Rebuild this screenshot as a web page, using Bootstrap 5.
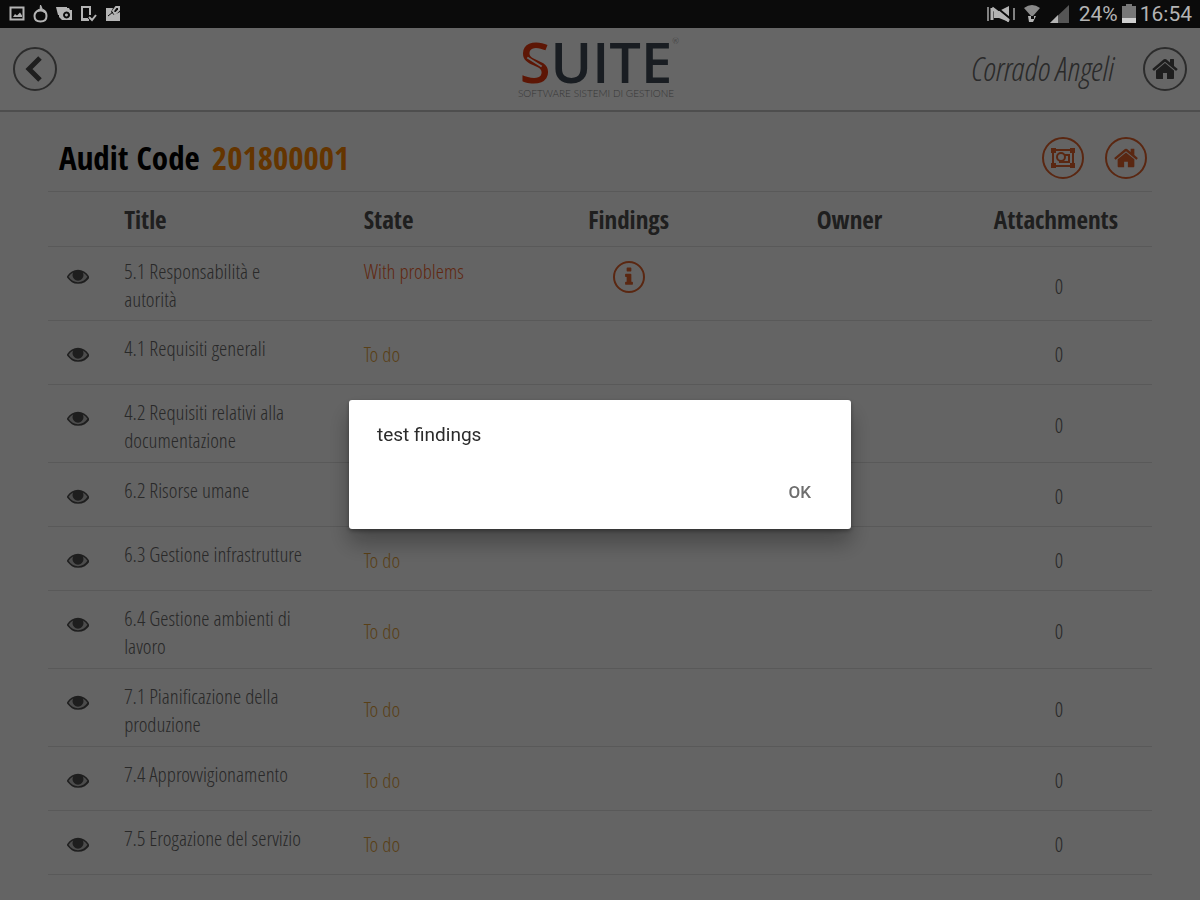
<!DOCTYPE html>
<html lang="en">
<head>
<meta charset="utf-8">
<meta name="viewport" content="width=device-width, initial-scale=1">
<title>Suite - Audit 201800001</title>
<link href="https://cdn.jsdelivr.net/npm/bootstrap@5.3.0/dist/css/bootstrap.min.css" rel="stylesheet">
<style>
:root { --bar-h: 28px; --cond-light: "Open Sans Condensed Light", "Open Sans Condensed", "Roboto Condensed", sans-serif; --cond-bold: "Open Sans Condensed", "Roboto Condensed", sans-serif; }
body { background: #fafafa; color: #666; font-family: var(--cond-light); font-weight: 300; font-size: 21px; line-height: 28px; min-height: 100vh; }
.status-bar { height: var(--bar-h); background: #0b0b0b; color: #b4b4b4; font-family: Roboto, sans-serif; font-weight: 400; font-size: 21px; line-height: 28px; z-index: 1070; }
.app-header { height: 84px; padding: 0 13px; background: #fff; border-bottom: 2px solid #c4c4c4; }
.app-header > div { flex: 1 1 0; }
.round-btn { width: 44px; height: 44px; flex: none; border: 2px solid currentColor; border-radius: 50%; background: none; padding: 0; color: #6e6e6e; }
.round-btn svg { color: #4c4c4c; }
.round-btn.accent { color: #e0622c; width: 42px; height: 42px; }
.round-btn.accent svg { color: #e0622c; }
.round-btn.info-btn { width: 32px; height: 32px; }
.brand-block { padding-bottom: 4px; }
.brand-name { font-family: "Open Sans", sans-serif; font-weight: 600; font-size: 56px; line-height: 52px; color: #3f4a55; }
.brand-s { color: #e8380d; position: relative; }
.brand-s::after { content: ""; position: absolute; left: 6px; top: 38px; width: 17px; height: 2px; background: #fff; transform: rotate(32deg); }
.brand-tag { font-family: Lato, sans-serif; font-size: 10px; line-height: 12px; color: #8a8a8a; }
.brand-reg { font-size: 8px; line-height: 12px; color: #777; font-family: Lato, sans-serif; width: 0; }
.user-name { font-style: italic; font-size: 33px; line-height: 44px; color: #6a6a6a; }
.user-area { gap: 30px; }
.audit-head { height: 79px; padding: 12px 5px 0 11px; }
.audit-head h1 { font-family: var(--cond-bold); font-weight: 700; font-size: 33px; line-height: 44px; color: #000; }
.audit-code { color: #f98500; }
.audit-actions { gap: 21px; }
.audit-table { --bs-table-bg: transparent; --bs-table-color: #666; table-layout: fixed; border-top: 1px solid #dedede; border-color: #dedede; }
.audit-table > :not(caption) > * > * { padding: 0; border-bottom: 1px solid #dedede; }
.audit-table th { font-family: var(--cond-bold); font-weight: 700; font-size: 25px; height: 55px; color: #4e4e4e; vertical-align: middle; }
.audit-table tbody td { height: 64px; }
.audit-table tbody .cell-title { padding: 13px 50px 8px 0; vertical-align: top; }
.audit-table tbody .cell-eye { padding: 22px 16px 0 0; vertical-align: top; text-align: center; }
.audit-table tbody .cell-mid { padding-top: 3px; vertical-align: middle; }
.audit-table tbody .cell-count { padding-right: 0; padding-left: 6px; }
.audit-table tbody tr.has-finding td { padding-top: 10px; padding-bottom: 6px; height: 74px; }
.audit-table tbody tr.has-finding .cell-eye { padding-top: 18px; }
.audit-table tbody tr.has-finding .cell-info { padding-top: 14px; }
.eye-btn { background: none; border: 0; padding: 0; width: 24px; height: 22px; color: #4c4c4c; display: inline-flex; align-items: center; justify-content: center; vertical-align: top; }
.state-problem { color: #f0652f; }
.audit-table .state-todo { color: #dfa03a; }
.modal-backdrop.page-dim { --bs-backdrop-opacity: .6; }
.alert-modal { top: var(--bar-h); height: calc(100% - var(--bar-h)); font-family: Roboto, sans-serif; font-weight: 400; }
.alert-modal .modal-dialog { --bs-modal-width: 502px; }
.alert-modal .modal-content { border: 0; border-radius: 3px; padding: 22px 28px 17px; box-shadow: 0 14px 22px rgba(0,0,0,.3), 0 2px 4px rgba(0,0,0,.35); }
.alert-modal p { font-size: 19px; line-height: 26px; color: #2b2b2b; }
.alert-ok { font-size: 17px; font-weight: 500; line-height: 24px; color: #6e6e6e; border: 0; background: none; padding: 8px 12px; }
</style>
</head>
<body>
<svg width="0" height="0" class="position-absolute" aria-hidden="true">
  <symbol id="ic-home" viewBox="0 0 1792 1792"><path fill="currentColor" d="M1472 992v480q0 26-19 45t-45 19h-384v-384h-256v384h-384q-26 0-45-19t-19-45v-480q0-1 .5-3t.5-3l575-474 575 474q1 2 1 6zm223-69l-62 74q-8 9-21 11h-3q-13 0-21-7l-692-577-692 577q-12 8-24 7-13-2-21-11l-62-74q-8-10-7-23.5t11-21.5l719-599q32-26 76-26t76 26l244 204v-195q0-14 9-23t23-9h192q14 0 23 9t9 23v408l219 182q10 8 11 21.5t-7 23.5z"/></symbol>
  <symbol id="ic-eye" viewBox="0 0 1792 1792"><path fill="currentColor" opacity=".35" d="M60 960Q400 500 896 480T1730 960Q1400 1420 896 1440T60 960z"/><circle fill="currentColor" cx="896" cy="850" r="380"/><path fill="currentColor" d="M1664 960q-152-236-381-353 61 104 61 225 0 185-131.500 316.500t-316.500 131.500-316.500-131.500-131.500-316.500q0-121 61-225-229 117-381 353 133 205 333.500 326.500t434.500 121.500 434.500-121.500 333.500-326.500zm184 0q0 34-20 69-140 230-376.500 368.500t-555.500 138.500-499.500-139-376.500-368q-20-35-20-69t20-69q140-229 376.500-368t499.500-139 499.500 139 376.500 368q20 35 20 69z"/></symbol>
  <symbol id="ic-info" viewBox="0 0 1792 1792"><path fill="currentColor" d="M1216 1344v128q0 26-19 45t-45 19h-512q-26 0-45-19t-19-45v-128q0-26 19-45t45-19h64v-384h-64q-26 0-45-19t-19-45v-128q0-26 19-45t45-19h384q26 0 45 19t19 45v576h64q26 0 45 19t19 45zm-128-1152v192q0 26-19 45t-45 19h-256q-26 0-45-19t-19-45v-192q0-26 19-45t45-19h256q26 0 45 19t19 45z"/></symbol>
</svg>

<div class="status-bar position-relative d-flex align-items-center justify-content-between ps-2 pe-2">
  <div class="d-flex align-items-center gap-1">
    <svg width="20" height="20" viewBox="0 0 20 20" fill="none" stroke="currentColor"><path stroke-width="2" d="M2.500 3.500h13v12h-13z"/><path fill="currentColor" stroke="none" d="M5 13l2-3 2 1.500 3-3 2 3v1.500z"/></svg>
    <svg width="20" height="20" viewBox="0 0 20 20" fill="none" stroke="currentColor" stroke-width="2"><path d="M7 6C4 7.500 2.500 9.500 2.500 12c0 3.500 2.500 5.500 6 5.500s6-2 6-5.500C14.500 9.500 13 7 11 6"/><path d="M5 8l1-2 2-.5L8.500 1l2 4.500 2 1L13 9" fill="currentColor" stroke-width="1"/><ellipse cx="8.500" cy="11.500" rx="4" ry="4" fill="#0b0b0b" stroke="none"/></svg>
    <svg width="20" height="20" viewBox="0 0 20 20" fill="currentColor"><path d="M0 3h11v2H3v6H2Z"/><path fill-rule="evenodd" d="M3 5h3l1-1h6l1 2h2v10H6l-3-3zM10.500 7.500a3.500 3.500 0 1 0 .1 0zm0 2a1.500 1.500 0 1 1-.1 0z"/></svg>
    <svg width="20" height="20" viewBox="0 0 20 20" fill="none" stroke="currentColor" stroke-width="2"><path d="M10 11V3H2v13h7"/><path d="M2 15h6M9 13l3 3 4-5"/></svg>
    <svg width="20" height="20" viewBox="0 0 20 20"><path fill="currentColor" d="M2 4h7l-2 4 3 3 6-3v9H2z"/><path fill="none" stroke="currentColor" stroke-width="2" d="M9 7l3-4h3v3l-4 4z"/><path stroke="#0b0b0b" d="M4 12l5-4"/></svg>
  </div>
  <div class="d-flex align-items-center">
    <svg class="me-2" width="28" height="20" viewBox="0 0 28 20"><path fill="none" stroke="currentColor" stroke-width="2" opacity=".7" d="M1 3v14M27 4v12"/><path fill="currentColor" d="M7 7h5l10-5v16l-10-4H7z"/><path stroke="#0b0b0b" stroke-width="2" d="M8 2l17 14"/><path stroke="currentColor" stroke-width="3" d="M5 4v12M5 4l17 13"/></svg>
    <svg class="me-2" width="18" height="20" viewBox="0 0 18 20"><path fill="currentColor" opacity=".75" d="M1 4Q9-2 17 4l-7 8H8z"/><path fill="currentColor" d="M5 12h3v3h3v-3h2l-3 6H6z"/></svg>
    <svg class="me-1" width="22" height="20" viewBox="0 0 22 20"><path fill="#555" d="M20 1v18H1z"/><path fill="currentColor" d="M9 11v8H1z"/></svg>
    <span class="ms-1">24%</span>
    <svg class="ms-1 me-1" width="14" height="22" viewBox="0 0 14 22"><path fill="#777" d="M4 1h6v2h4v12H0V3h4z"/><path fill="#d0d0d0" d="M0 15h14v5H0z"/></svg>
    <span>16:54</span>
  </div>
</div>

<header class="app-header d-flex align-items-center">
  <div class="d-flex">
    <button type="button" class="round-btn d-flex align-items-center justify-content-center" aria-label="Back">
      <svg class="me-1" width="22" height="28" viewBox="0 0 22 28" fill="none" stroke="currentColor" stroke-width="5"><path d="M18 3L7 14l11 11"/></svg>
    </button>
  </div>
  <div class="brand-block d-flex flex-column align-items-center pe-2">
    <div class="d-flex"><span class="brand-name"><span class="brand-s">S</span>UITE</span><span class="brand-reg">®</span></div>
    <span class="brand-tag">SOFTWARE SISTEMI DI GESTIONE</span>
  </div>
  <div class="user-area d-flex align-items-center justify-content-end">
    <span class="user-name text-nowrap">Corrado Angeli</span>
    <button type="button" class="round-btn d-flex align-items-center justify-content-center" aria-label="Home"><svg width="28" height="28"><use href="#ic-home"/></svg></button>
  </div>
</header>

<main class="px-5">
  <div class="audit-head d-flex align-items-center justify-content-between">
    <h1 class="m-0">Audit Code <span class="audit-code ms-1">201800001</span></h1>
    <div class="d-flex audit-actions">
      <button type="button" class="round-btn accent d-flex align-items-center justify-content-center" aria-label="Frame">
        <svg width="26" height="24" viewBox="0 0 26 24" fill="none" stroke="currentColor" stroke-width="2"><path d="M3 4h20v16H3z"/><path fill="currentColor" stroke="none" d="M1 2h5v5H1zM20 2h5v5h-5zM1 17h5v5H1zM20 17h5v5h-5z"/><circle cx="11" cy="11" r="4"/><path d="M15 9h4v7h-9v-2"/></svg>
      </button>
      <button type="button" class="round-btn accent d-flex align-items-center justify-content-center" aria-label="Audit home"><svg width="26" height="26"><use href="#ic-home"/></svg></button>
    </div>
  </div>

  <table class="table audit-table mb-0">
    <colgroup><col style="width:6.9%"><col style="width:21.7%"><col style="width:14%"><col style="width:20%"><col style="width:20%"><col style="width:17.4%"></colgroup>
    <thead><tr><th></th><th>Title</th><th>State</th><th class="text-center">Findings</th><th class="text-center">Owner</th><th class="text-center">Attachments</th></tr></thead>
    <tbody>
      <tr class="has-finding"><td class="cell-eye"><button class="eye-btn" type="button" aria-label="View"><svg width="22" height="22"><use href="#ic-eye"/></svg></button></td><td class="cell-title">5.1 Responsabilità e autorità</td><td class="state-problem">With problems</td><td class="cell-info"><button type="button" class="round-btn accent info-btn d-flex align-items-center justify-content-center mx-auto" aria-label="Findings"><svg width="22" height="22"><use href="#ic-info"/></svg></button></td><td></td><td class="cell-mid cell-count text-center">0</td></tr>
      <tr><td class="cell-eye"><button class="eye-btn" type="button" aria-label="View"><svg width="22" height="22"><use href="#ic-eye"/></svg></button></td><td class="cell-title">4.1 Requisiti generali</td><td class="cell-mid state-todo">To do</td><td></td><td></td><td class="cell-mid cell-count text-center">0</td></tr>
      <tr><td class="cell-eye"><button class="eye-btn" type="button" aria-label="View"><svg width="22" height="22"><use href="#ic-eye"/></svg></button></td><td class="cell-title">4.2 Requisiti relativi alla documentazione</td><td></td><td></td><td></td><td class="cell-mid cell-count text-center">0</td></tr>
      <tr><td class="cell-eye"><button class="eye-btn" type="button" aria-label="View"><svg width="22" height="22"><use href="#ic-eye"/></svg></button></td><td class="cell-title">6.2 Risorse umane</td><td></td><td></td><td></td><td class="cell-mid cell-count text-center">0</td></tr>
      <tr><td class="cell-eye"><button class="eye-btn" type="button" aria-label="View"><svg width="22" height="22"><use href="#ic-eye"/></svg></button></td><td class="cell-title">6.3 Gestione infrastrutture</td><td class="cell-mid state-todo">To do</td><td></td><td></td><td class="cell-mid cell-count text-center">0</td></tr>
      <tr><td class="cell-eye"><button class="eye-btn" type="button" aria-label="View"><svg width="22" height="22"><use href="#ic-eye"/></svg></button></td><td class="cell-title">6.4 Gestione ambienti di lavoro</td><td class="cell-mid state-todo">To do</td><td></td><td></td><td class="cell-mid cell-count text-center">0</td></tr>
      <tr><td class="cell-eye"><button class="eye-btn" type="button" aria-label="View"><svg width="22" height="22"><use href="#ic-eye"/></svg></button></td><td class="cell-title">7.1 Pianificazione della produzione</td><td class="cell-mid state-todo">To do</td><td></td><td></td><td class="cell-mid cell-count text-center">0</td></tr>
      <tr><td class="cell-eye"><button class="eye-btn" type="button" aria-label="View"><svg width="22" height="22"><use href="#ic-eye"/></svg></button></td><td class="cell-title">7.4 Approvvigionamento</td><td class="cell-mid state-todo">To do</td><td></td><td></td><td class="cell-mid cell-count text-center">0</td></tr>
      <tr><td class="cell-eye"><button class="eye-btn" type="button" aria-label="View"><svg width="22" height="22"><use href="#ic-eye"/></svg></button></td><td class="cell-title">7.5 Erogazione del servizio</td><td class="cell-mid state-todo">To do</td><td></td><td></td><td class="cell-mid cell-count text-center">0</td></tr>
    </tbody>
  </table>
</main>

<div class="modal-backdrop page-dim show"></div>
<div class="modal alert-modal show d-block" role="alertdialog" aria-modal="true" aria-labelledby="alertText" tabindex="-1">
  <div class="modal-dialog modal-dialog-centered my-0 h-100">
    <div class="modal-content">
      <p id="alertText" class="mb-4">test findings</p>
      <div class="d-flex justify-content-end"><button type="button" class="alert-ok">OK</button></div>
    </div>
  </div>
</div>
<script src="https://cdn.jsdelivr.net/npm/bootstrap@5.3.0/dist/js/bootstrap.bundle.min.js"></script>
</body>
</html>
